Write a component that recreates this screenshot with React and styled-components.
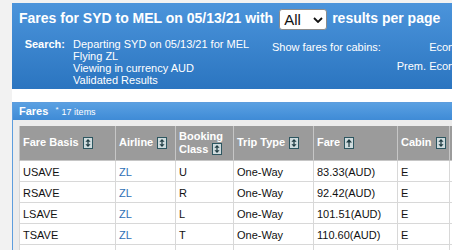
import React from "react";
import styled, { createGlobalStyle } from "styled-components";

const GlobalStyle = createGlobalStyle`
  html, body {
    margin: 0;
    padding: 0;
    background: #f2f2f2;
    overflow: hidden;
  }
  body {
    font-family: "Liberation Sans", Arial, sans-serif;
  }
`;

const fares = [
  { basis: "USAVE", airline: "ZL", cls: "U", trip: "One-Way", fare: "83.33(AUD)", cabin: "E" },
  { basis: "RSAVE", airline: "ZL", cls: "R", trip: "One-Way", fare: "92.42(AUD)", cabin: "E" },
  { basis: "LSAVE", airline: "ZL", cls: "L", trip: "One-Way", fare: "101.51(AUD)", cabin: "E" },
  { basis: "TSAVE", airline: "ZL", cls: "T", trip: "One-Way", fare: "110.60(AUD)", cabin: "E" },
  { basis: "KSAVE", airline: "ZL", cls: "K", trip: "One-Way", fare: "119.69(AUD)", cabin: "E" },
];

const SortIcon = ({ up }) => (
  <Icon width="10" height="12" viewBox="0 0 10 12">
    <rect x="0.5" y="0.5" width="9" height="11" fill="#cfdbdd" stroke="#2d5660" />
    {up ? (
      <>
        <path d="M5 2 L8 5.5 H2 Z" fill="#1d3a41" />
        <rect x="4.4" y="5" width="1.2" height="5" fill="#1d3a41" />
      </>
    ) : (
      <>
        <path d="M5 2 L7.6 4.8 H2.4 Z M5 10 L7.6 7.2 H2.4 Z" fill="#1d3a41" />
        <rect x="4.4" y="4.5" width="1.2" height="3" fill="#1d3a41" />
      </>
    )}
  </Icon>
);

const App = () => {
  return (
    <>
      <GlobalStyle />
      <Page>
        <SearchBox>
          <TitleRow>
            <Title>Fares for SYD to MEL on 05/13/21 with</Title>
            <SelectWrap>
              <PageSelect defaultValue="All">
                <option>All</option>
                <option>25</option>
                <option>50</option>
              </PageSelect>
              <Chevron width="10" height="6" viewBox="0 0 10 6">
                <path d="M1 1 L5 5 L9 1" fill="none" stroke="#111" strokeWidth="1.8" />
              </Chevron>
            </SelectWrap>
            <Title>results per page</Title>
          </TitleRow>
          <Details>
            <Label>Search:</Label>
            <Lines>
              <div>Departing SYD on 05/13/21 for MEL</div>
              <div>Flying ZL</div>
              <div>Viewing in currency AUD</div>
              <div>Validated Results</div>
            </Lines>
            <CabinLabel>Show fares for cabins:</CabinLabel>
            <Cabins>
              <CabinRow>
                <span>Economy</span>
                <input type="checkbox" defaultChecked />
              </CabinRow>
              <CabinRow>
                <span>Prem. Economy</span>
                <input type="checkbox" defaultChecked />
              </CabinRow>
            </Cabins>
          </Details>
        </SearchBox>

        <Panel>
          <PanelTitle>
            Fares <Star>*</Star> <Count>17 items</Count>
          </PanelTitle>
          <PanelBody>
            <Table>
              <colgroup>
                <col style={{ width: 96 }} />
                <col style={{ width: 60 }} />
                <col style={{ width: 58 }} />
                <col style={{ width: 80 }} />
                <col style={{ width: 84 }} />
                <col style={{ width: 52 }} />
                <col style={{ width: 80 }} />
              </colgroup>
              <thead>
                <tr>
                  <Th>Fare Basis <SortIcon /></Th>
                  <Th>Airline <SortIcon /></Th>
                  <Th>Booking<br />Class <SortIcon /></Th>
                  <Th>Trip Type <SortIcon /></Th>
                  <Th>Fare <SortIcon up /></Th>
                  <Th>Cabin <SortIcon /></Th>
                  <Th>Rules</Th>
                </tr>
              </thead>
              <tbody>
                {fares.map((f) => (
                  <Row key={f.basis}>
                    <Td>{f.basis}</Td>
                    <Td><AirlineLink href="#">{f.airline}</AirlineLink></Td>
                    <Td>{f.cls}</Td>
                    <Td>{f.trip}</Td>
                    <Td>{f.fare}</Td>
                    <Td>{f.cabin}</Td>
                    <Td>View</Td>
                  </Row>
                ))}
              </tbody>
            </Table>
          </PanelBody>
        </Panel>
      </Page>
    </>
  );
};

export default App;

const Page = styled.div`
  margin: 3px 0 0 12px;
  width: 640px;
  min-height: 260px;
  background: #fff;
`;

const SearchBox = styled.section`
  background: linear-gradient(to bottom, #4b94db, #2b75c0);
  color: #fff;
  padding: 6px 0 3px 7px;
`;

const TitleRow = styled.div`
  display: flex;
  align-items: flex-start;
  height: 21px;
`;

const Title = styled.span`
  font-size: 14px;
  line-height: 16px;
  font-weight: bold;
  margin-top: 1px;
  white-space: nowrap;
`;

const SelectWrap = styled.div`
  position: relative;
  margin: 0 5px 0 6px;
`;

const PageSelect = styled.select`
  appearance: none;
  width: 48px;
  height: 21px;
  box-sizing: border-box;
  border: 1px solid #8c8c8c;
  border-radius: 3px;
  background: #fff;
  color: #111;
  font-family: "Liberation Sans", Arial, sans-serif;
  font-size: 15px;
  padding: 0 0 0 4px;
  margin: 0;
`;

const Chevron = styled.svg`
  position: absolute;
  right: 4px;
  top: 8px;
  pointer-events: none;
`;

const Details = styled.div`
  display: grid;
  grid-template-columns: 50px 203px 109px 112px;
  margin-top: 8px;
  font-size: 11px;
  line-height: 12px;
`;

const Label = styled.div`
  font-weight: bold;
  text-align: right;
  padding-right: 4px;
`;

const Lines = styled.div`
  padding-left: 4px;
`;

const CabinLabel = styled.div`
  height: 19px;
  line-height: 19px;
  white-space: nowrap;
`;

const Cabins = styled.div`
  display: flex;
  flex-direction: column;
  align-items: flex-end;
`;

const CabinRow = styled.div`
  display: flex;
  align-items: center;
  height: 19px;
  line-height: 19px;
  white-space: nowrap;

  input {
    margin: 0 0 0 6px;
    width: 12px;
    height: 12px;
  }
`;

const Panel = styled.section`
  margin-top: 13px;
  border: 1px solid #5d9ddd;
  background: #ececec;
`;

const PanelTitle = styled.div`
  height: 17px;
  line-height: 17px;
  padding-left: 6px;
  background: linear-gradient(to bottom, #5aa0e2, #3f8bd6);
  color: #fff;
  font-size: 11px;
  font-weight: bold;
`;

const Star = styled.span`
  font-size: 8px;
  font-weight: normal;
  vertical-align: top;
  line-height: 14px;
  margin-left: 4px;
`;

const Count = styled.span`
  font-size: 9px;
  font-weight: normal;
`;

const PanelBody = styled.div`
  padding: 6px 0 0 6px;
`;

const Table = styled.table`
  border-collapse: collapse;
  table-layout: fixed;
  width: 510px;
  font-size: 11px;
  background: #fff;
`;

const Th = styled.th`
  height: 34px;
  padding: 0 3px;
  background: #9b9b9b;
  color: #fff;
  font-weight: bold;
  text-align: left;
  vertical-align: middle;
  line-height: 12.5px;
  border: 1px solid #c6c6c6;
  border-top: none;
  white-space: nowrap;
`;

const Icon = styled.svg`
  display: inline-block;
  vertical-align: middle;
  margin-left: 1px;
  position: relative;
  top: -1px;
`;

const Row = styled.tr`
  height: 21px;
`;

const Td = styled.td`
  padding: 1px 3px 0;
  color: #111;
  border: 1px solid #d8d8d8;
  vertical-align: middle;
  white-space: nowrap;
`;

const AirlineLink = styled.a`
  color: #2e6fb6;
  text-decoration: none;
`;
